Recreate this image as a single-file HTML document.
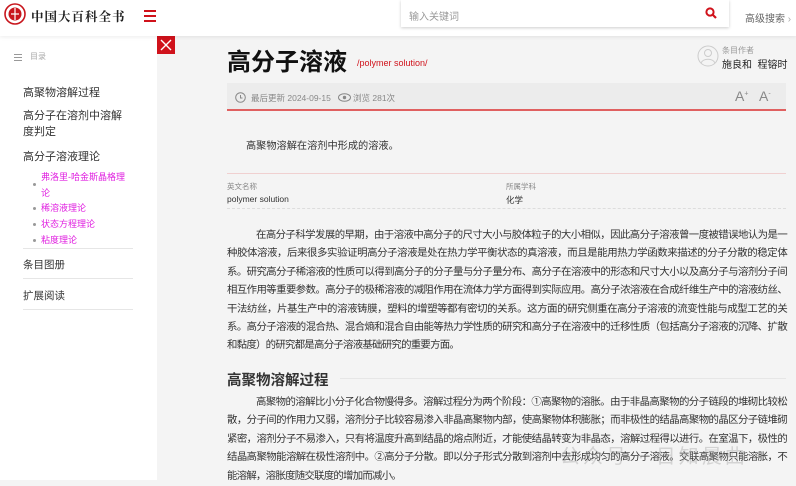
<!DOCTYPE html>
<html><head><meta charset="utf-8"><style>
*{margin:0;padding:0;box-sizing:border-box}
body{width:796px;height:480px;overflow:hidden;background:#f4f4f4;font-family:"Liberation Sans","Noto Sans CJK SC",sans-serif;color:#333;position:relative}
.hdr{position:absolute;left:0;top:0;width:796px;height:36px;background:#fff;box-shadow:0 1px 4px rgba(0,0,0,.08);z-index:2}
.abs{position:absolute}
.side{position:absolute;left:0;top:36px;width:157px;height:444px;background:#fff}
.p{font-size:10.4px;letter-spacing:-0.72px;line-height:18.4px;color:#333;text-indent:29px;text-align:justify}
.nav{position:absolute;left:23px;font-size:11px;color:#333}
.sub{position:absolute;left:41px;font-size:9px;color:#e020e0}
.dot{position:absolute;left:33px;width:3px;height:3px;background:#999;border-radius:50%}
.ln{position:absolute;left:23px;width:110px;height:1px;background:#e6e6e6}
</style></head><body>
<div class="hdr">
 <svg class="abs" style="left:4px;top:3px" width="22" height="22" viewBox="0 0 22 22"><circle cx="11" cy="11" r="10" fill="none" stroke="#c8161d" stroke-width="1.6"/><circle cx="11" cy="11" r="6.5" fill="#c8161d"/><path d="M11 5v12M7 11h8" stroke="#fff" stroke-width="1.2"/></svg>
 <div class="abs" style="left:31px;top:7px;font-family:'Noto Serif CJK SC',serif;font-size:12.5px;letter-spacing:1px;color:#222;font-weight:bold">中国大百科全书</div>
 <div class="abs" style="left:144px;top:10px;width:12px;height:2px;background:#d0121b;box-shadow:0 5px 0 #d0121b,0 10px 0 #d0121b"></div>
 <div class="abs" style="left:401px;top:0;width:328px;height:27px;background:#fff;box-shadow:0 1px 3px rgba(0,0,0,.2)"></div>
 <div class="abs" style="left:409px;top:8px;font-size:10px;color:#999">输入关键词</div>
 <svg class="abs" style="left:705px;top:7px" width="12" height="12" viewBox="0 0 12 12"><circle cx="5" cy="5" r="3.6" fill="none" stroke="#d0121b" stroke-width="2"/><path d="M7.6 7.6L11 11" stroke="#d0121b" stroke-width="2.2"/></svg>
 <div class="abs" style="left:745px;top:10px;font-size:10px;color:#666">高级搜索 <span style="color:#aaa">›</span></div>
</div>
<div class="side">
 <div class="abs" style="left:14px;top:18px;width:8px;height:1px;background:#999;box-shadow:0 3px 0 #999,0 6px 0 #999"></div>
 <div class="abs" style="left:30px;top:15px;font-size:8px;color:#aaa">目录</div>
</div>
<div class="nav" style="top:84px">高聚物溶解过程</div>
<div class="nav" style="top:108px;line-height:16px">高分子在溶剂中溶解<br>度判定</div>
<div class="nav" style="top:148px">高分子溶液理论</div>
<div class="dot" style="top:183px"></div><div class="sub" style="top:169px;line-height:16px">弗洛里-哈金斯晶格理<br>论</div>
<div class="dot" style="top:207px"></div><div class="sub" style="top:201px">稀溶液理论</div>
<div class="dot" style="top:223px"></div><div class="sub" style="top:217px">状态方程理论</div>
<div class="dot" style="top:239px"></div><div class="sub" style="top:233px">粘度理论</div>
<div class="ln" style="top:248px"></div>
<div class="nav" style="top:257px;font-size:10.5px">条目图册</div>
<div class="ln" style="top:278px"></div>
<div class="nav" style="top:288px;font-size:10.5px">扩展阅读</div>
<div class="ln" style="top:309px"></div>
<div class="abs" style="left:157px;top:36px;width:18px;height:18px;background:#d0121b"><svg width="18" height="18"><path d="M4 4l10 10M14 4L4 14" stroke="#fff" stroke-width="1.4"/></svg></div>
<div class="abs" style="left:227px;top:42px;font-size:24px;font-weight:bold;color:#111">高分子溶液</div>
<div class="abs" style="left:357px;top:58px;font-size:9px;color:#d0121b">/polymer solution/</div>
<svg class="abs" style="left:697px;top:45px" width="22" height="22"><circle cx="11" cy="11" r="10" fill="none" stroke="#ccc"/><circle cx="11" cy="8" r="3.5" fill="none" stroke="#ccc"/><path d="M4 18c2-5 12-5 14 0" fill="none" stroke="#ccc"/></svg>
<div class="abs" style="left:722px;top:45px;font-size:8px;color:#999">条目作者</div>
<div class="abs" style="left:722px;top:56px;font-size:10px;color:#222">施良和 &nbsp;程镕时</div>
<div class="abs" style="left:227px;top:83px;width:559px;height:28px;background:#ececec;border-bottom:2px solid #e06060"></div>
<svg class="abs" style="left:235px;top:92px" width="11" height="11"><circle cx="5.5" cy="5.5" r="4.8" fill="none" stroke="#888"/><path d="M5.5 3v3h2" fill="none" stroke="#888"/></svg>
<div class="abs" style="left:251px;top:92px;font-size:8.5px;color:#888">最后更新 2024-09-15</div>
<svg class="abs" style="left:338px;top:93px" width="13" height="9"><ellipse cx="6.5" cy="4.5" rx="6" ry="3.8" fill="none" stroke="#888"/><circle cx="6.5" cy="4.5" r="1.7" fill="#888"/></svg>
<div class="abs" style="left:353px;top:92px;font-size:8.5px;color:#888">浏览 281次</div>
<div class="abs" style="left:735px;top:88px;font-size:14px;color:#888">A<sup style="font-size:7px">+</sup></div>
<div class="abs" style="left:759px;top:88px;font-size:14px;color:#888">A<sup style="font-size:7px">-</sup></div>
<div class="abs" style="left:246px;top:137px;font-size:10.2px;color:#333">高聚物溶解在溶剂中形成的溶液。</div>
<div class="abs" style="left:227px;top:173px;width:559px;height:1px;background:#f0d0d0"></div>
<div class="abs" style="left:227px;top:181px;font-size:7.5px;color:#888">英文名称</div>
<div class="abs" style="left:227px;top:194px;font-size:8.5px;color:#333">polymer solution</div>
<div class="abs" style="left:506px;top:181px;font-size:7.5px;color:#888">所属学科</div>
<div class="abs" style="left:506px;top:194px;font-size:8.5px;color:#333">化学</div>
<div class="abs" style="left:227px;top:208px;width:559px;border-top:1px dashed #ddd"></div>
<div class="abs p" style="left:227px;top:227px;width:560px">在高分子科学发展的早期，由于溶液中高分子的尺寸大小与胶体粒子的大小相似，因此高分子溶液曾一度被错误地认为是一种胶体溶液，后来很多实验证明高分子溶液是处在热力学平衡状态的真溶液，而且是能用热力学函数来描述的分子分散的稳定体系。研究高分子稀溶液的性质可以得到高分子的分子量与分子量分布、高分子在溶液中的形态和尺寸大小以及高分子与溶剂分子间相互作用等重要参数。高分子的极稀溶液的减阻作用在流体力学方面得到实际应用。高分子浓溶液在合成纤维生产中的溶液纺丝、干法纺丝，片基生产中的溶液铸膜，塑料的增塑等都有密切的关系。这方面的研究侧重在高分子溶液的流变性能与成型工艺的关系。高分子溶液的混合热、混合熵和混合自由能等热力学性质的研究和高分子在溶液中的迁移性质（包括高分子溶液的沉降、扩散和黏度）的研究都是高分子溶液基础研究的重要方面。</div>
<div class="abs" style="left:227px;top:369px;font-size:14.5px;font-weight:bold;color:#333">高聚物溶解过程</div>
<div class="abs" style="left:340px;top:378px;width:446px;height:1px;background:#e6e6e6"></div>
<div class="abs p" style="left:227px;top:394px;width:560px">高聚物的溶解比小分子化合物慢得多。溶解过程分为两个阶段：①高聚物的溶胀。由于非晶高聚物的分子链段的堆砌比较松散，分子间的作用力又弱，溶剂分子比较容易渗入非晶高聚物内部，使高聚物体积膨胀；而非极性的结晶高聚物的晶区分子链堆砌紧密，溶剂分子不易渗入，只有将温度升高到结晶的熔点附近，才能使结晶转变为非晶态，溶解过程得以进行。在室温下，极性的结晶高聚物能溶解在极性溶剂中。②高分子分散。即以分子形式分散到溶剂中去形成均匀的高分子溶液。交联高聚物只能溶胀，不能溶解，溶胀度随交联度的增加而减小。</div>
<div class="abs" style="left:560px;top:440px;font-size:20px;color:rgba(150,150,150,.35);letter-spacing:3px">公众号 · 日知晨曲</div>
</body></html>
